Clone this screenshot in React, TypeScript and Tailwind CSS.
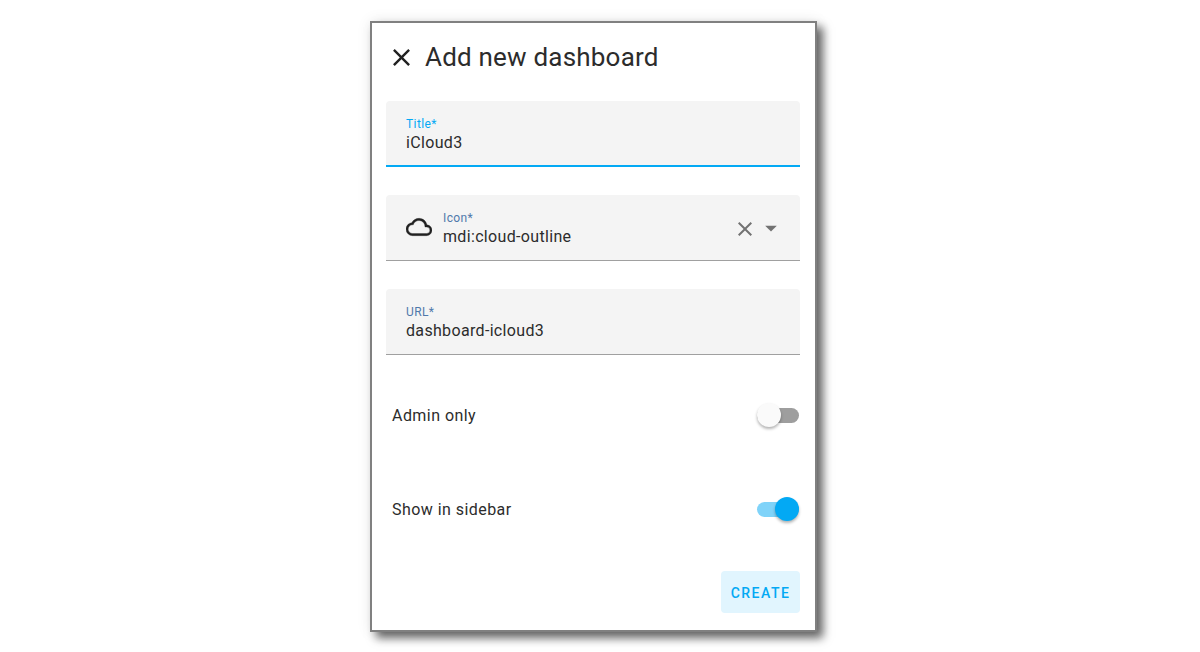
const font = "font-['Roboto',sans-serif]";

function Field({ label, value, active }: { label: string; value: string; active?: boolean }) {
  return (
    <div className={`h-[66px] bg-[#f4f4f4] rounded-t-[4px] pl-5 pt-[16px] ${active ? "border-b-2 border-[#03a9f4]" : "border-b border-[#a0a0a0]"}`}>
      <div className={`text-[12px] leading-[14px] tracking-[0.4px] ${active ? "text-[#03a9f4]" : "text-[#5079ab]"}`}>{label}</div>
      <div className="text-[16px] leading-[24px] tracking-[0.33px] text-[#2c2c2c]">{value}</div>
    </div>
  );
}

function Toggle({ on }: { on?: boolean }) {
  return (
    <div className={`relative w-[42px] h-[15px] rounded-full mr-[1px] ${on ? "bg-[#7fd3f9]" : "bg-[#9e9e9e]"}`}>
      <div className={`absolute top-[-5px] ${on ? "right-0 bg-[#03a9f4]" : "left-0 bg-[#fafafa]"} w-6 h-6 rounded-full shadow-[0_2px_3px_rgba(0,0,0,0.3)]`} />
    </div>
  );
}

export default function App() {
  return (
    <div className={`w-[1200px] h-[652px] bg-white overflow-hidden pt-[21px] pl-[370px] ${font}`}>
      <div className="w-[447px] h-[611px] bg-white border-2 border-[#808080] shadow-[6px_6px_9px_rgba(0,0,0,0.6),0_0_14px_rgba(0,0,0,0.08)] flex flex-col">
        <div className="h-[78px] flex items-center pl-[15px] gap-[9px] pb-[10px] shrink-0">
          <svg width="29" height="29" viewBox="0 0 24 24" fill="#212121" className="shrink-0">
            <path d="M19,6.41L17.59,5L12,10.59L6.41,5L5,6.41L10.59,12L5,17.59L6.41,19L12,13.41L17.59,19L19,17.59L13.41,12L19,6.41Z" />
          </svg>
          <div className="text-[26px] leading-[32px] text-[#2c2c2c] tracking-[0.2px]">Add new dashboard</div>
        </div>
        <div className="px-[14px] mr-[1px] flex flex-col gap-[28px]">
          <Field label="Title*" value="iCloud3" active />
          <div className="h-[66px] bg-[#f4f4f4] rounded-t-[4px] border-b border-[#a0a0a0] flex items-center pl-[20px] pr-[18px]">
            <svg width="26" height="26" viewBox="0 0 24 24" fill="#212121" stroke="#212121" strokeWidth="0.3" className="shrink-0 -mt-[2px]">
              <path d="M19,18H6A4,4 0 0,1 2,14A4,4 0 0,1 6,10H6.71C7.37,7.69 9.5,6 12,6A5.5,5.5 0 0,1 17.5,11.5V12H19A3,3 0 0,1 22,15A3,3 0 0,1 19,18M19.35,10.03C18.67,6.59 15.64,4 12,4C9.11,4 6.6,5.64 5.35,8.03C2.34,8.36 0,10.9 0,14A6,6 0 0,0 6,20H19C21.76,20 24,17.76 24,15C24,12.36 21.95,10.22 19.35,10.03Z" />
            </svg>
            <div className="ml-[11px] flex-1 pt-[5px]">
              <div className="text-[12px] leading-[14px] tracking-[0.4px] text-[#5079ab]">Icon*</div>
              <div className="text-[16px] leading-[24px] tracking-[0.33px] text-[#2c2c2c]">mdi:cloud-outline</div>
            </div>
            <svg width="24" height="24" viewBox="0 0 24 24" fill="#727272" className="shrink-0 mt-[2px]">
              <path d="M19,6.41L17.59,5L12,10.59L6.41,5L5,6.41L10.59,12L5,17.59L6.41,19L12,13.41L17.59,19L19,17.59L13.41,12L19,6.41Z" />
            </svg>
            <svg width="28" height="28" viewBox="0 0 24 24" fill="#727272" className="shrink-0 -mr-[3px]">
              <path d="M7,10L12,15L17,10H7Z" />
            </svg>
          </div>
          <Field label="URL*" value="dashboard-icloud3" />
        </div>
        <div className="pl-[20px] pr-[15px] flex flex-col shrink-0">
          <div className="h-[94px] mt-[13px] flex items-center justify-between">
            <span className="text-[16px] tracking-[0.45px] text-[#2c2c2c] translate-y-[1px]">Admin only</span>
            <Toggle />
          </div>
          <div className="h-[94px] flex items-center justify-between">
            <span className="text-[16px] tracking-[0.45px] text-[#2c2c2c] translate-y-[1px]">Show in sidebar</span>
            <Toggle on />
          </div>
        </div>
        <div className="flex justify-end pr-[15px] mt-[15px]">
          <div className="w-[79px] h-[42px] rounded-[4px] bg-[#e1f5fe] flex items-center justify-center pt-[2px] text-[14px] font-medium tracking-[1.5px] text-[#03a9f4]">CREATE</div>
        </div>
      </div>
    </div>
  );
}
